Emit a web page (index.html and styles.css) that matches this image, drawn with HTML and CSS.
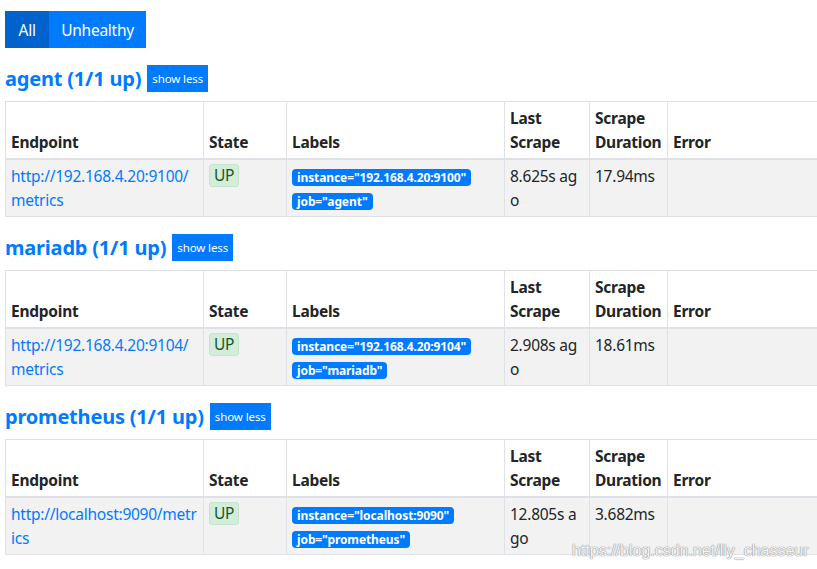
FILE: index.html
```html
<!DOCTYPE html>
<html lang="en">
<head>
<meta charset="utf-8">
<title>Targets</title>
<link rel="stylesheet" href="styles.css">
</head>
<body>
<div class="page">
  <div class="filters">
    <button class="fbtn active">All</button><button class="fbtn">Unhealthy</button>
  </div>

  <section class="pool">
    <div class="pool-head">
      <h2 class="pool-title">agent (1/1 up)</h2>
      <button class="toggle">show less</button>
    </div>
    <table class="targets">
      <colgroup><col class="c-ep"><col class="c-st"><col class="c-lb"><col class="c-ls"><col class="c-sd"><col class="c-er"></colgroup>
      <thead><tr><th>Endpoint</th><th>State</th><th>Labels</th><th>Last Scrape</th><th>Scrape Duration</th><th>Error</th></tr></thead>
      <tbody><tr>
        <td><a href="#">http://192.168.4.20:9100/metrics</a></td>
        <td><span class="state">UP</span></td>
        <td><span class="lbl">instance="192.168.4.20:9100"</span><br><span class="lbl">job="agent"</span></td>
        <td>8.625s ago</td>
        <td>17.94ms</td>
        <td></td>
      </tr></tbody>
    </table>
  </section>

  <section class="pool">
    <div class="pool-head">
      <h2 class="pool-title">mariadb (1/1 up)</h2>
      <button class="toggle">show less</button>
    </div>
    <table class="targets">
      <colgroup><col class="c-ep"><col class="c-st"><col class="c-lb"><col class="c-ls"><col class="c-sd"><col class="c-er"></colgroup>
      <thead><tr><th>Endpoint</th><th>State</th><th>Labels</th><th>Last Scrape</th><th>Scrape Duration</th><th>Error</th></tr></thead>
      <tbody><tr>
        <td><a href="#">http://192.168.4.20:9104/metrics</a></td>
        <td><span class="state">UP</span></td>
        <td><span class="lbl">instance="192.168.4.20:9104"</span><br><span class="lbl">job="mariadb"</span></td>
        <td>2.908s ago</td>
        <td>18.61ms</td>
        <td></td>
      </tr></tbody>
    </table>
  </section>

  <section class="pool">
    <div class="pool-head">
      <h2 class="pool-title">prometheus (1/1 up)</h2>
      <button class="toggle">show less</button>
    </div>
    <table class="targets">
      <colgroup><col class="c-ep"><col class="c-st"><col class="c-lb"><col class="c-ls"><col class="c-sd"><col class="c-er"></colgroup>
      <thead><tr><th>Endpoint</th><th>State</th><th>Labels</th><th>Last Scrape</th><th>Scrape Duration</th><th>Error</th></tr></thead>
      <tbody><tr>
        <td><a href="#">http://localhost:9090/metrics</a></td>
        <td><span class="state">UP</span></td>
        <td><span class="lbl">instance="localhost:9090"</span><br><span class="lbl">job="prometheus"</span></td>
        <td>12.805s ago</td>
        <td>3.682ms</td>
        <td></td>
      </tr></tbody>
    </table>
  </section>
</div>
<div class="watermark">https://blog.csdn.net/liy_chasseur</div>
</body>
</html>
```
FILE: styles.css
```css
html, body {
  margin: 0;
  padding: 0;
  background: #fff;
  overflow: hidden;
}
body {
  font-family: "Noto Sans", "Open Sans", sans-serif;
  font-size: 15.5px;
  letter-spacing: -0.25px;
  line-height: 24px;
  color: #212529;
}
.page {
  padding: 11px 0 0 5px;
  width: 850px;
}
.filters {
  display: flex;
  height: 37px;
}
.fbtn {
  font: inherit;
  letter-spacing: inherit;
  color: #fff;
  background: #007bff;
  border: 0;
  border-radius: 0;
  padding: 0 12px;
  height: 37px;
  margin: 0;
}
.fbtn.active {
  background: #0062cc;
  padding: 0 13.5px;
}
.pool {
  margin-top: 17px;
}
.pool-head {
  display: flex;
  align-items: center;
  gap: 6px;
  height: 27px;
  margin-bottom: 9px;
}
.pool-title {
  margin: 0;
  font-size: 20px;
  letter-spacing: -0.2px;
  font-weight: 700;
  color: #007bff;
  line-height: 27px;
}
.toggle {
  font: inherit;
  font-size: 11.5px;
  letter-spacing: -0.1px;
  line-height: 27px;
  height: 27px;
  padding: 0 5px;
  border: 0;
  border-radius: 0;
  background: #007bff;
  color: #fff;
}
.targets {
  border-collapse: collapse;
  table-layout: fixed;
  width: 840px;
}
.c-ep { width: 198px; }
.c-st { width: 83px; }
.c-lb { width: 218px; }
.c-ls { width: 85px; }
.c-sd { width: 78px; }
.targets th,
.targets td {
  border: 1px solid #dee2e6;
  padding: 4px 5px;
  text-align: left;
}
.targets th {
  vertical-align: bottom;
  font-weight: 700;
  border-bottom-width: 2px;
}
.targets td {
  vertical-align: top;
  background: #f2f2f2;
  word-break: break-all;
}
.targets a {
  color: #007bff;
  text-decoration: none;
}
.state {
  display: inline-block;
  line-height: 21px;
  padding: 0 4px;
  background: #d4edda;
  border: 1px solid #c3e6cb;
  border-radius: 3px;
  color: #155724;
  vertical-align: top;
}
.lbl {
  display: inline-block;
  font-size: 12px;
  letter-spacing: -0.1px;
  font-weight: 700;
  line-height: 12px;
  padding: 3px 5px 2px;
  color: #fff;
  background: #007bff;
  border-radius: 4px;
  vertical-align: middle;
  word-break: normal;
  white-space: nowrap;
}
.watermark {
  position: absolute;
  left: 572px;
  top: 539px;
  font-family: "Liberation Sans", Arial, sans-serif;
  font-size: 16px;
  letter-spacing: 0;
  color: rgba(255, 255, 255, 0.9);
  text-shadow: 0 0 1px #999, 0 0 1px #999, 0 0 1px #aaa;
  pointer-events: none;
}
```
